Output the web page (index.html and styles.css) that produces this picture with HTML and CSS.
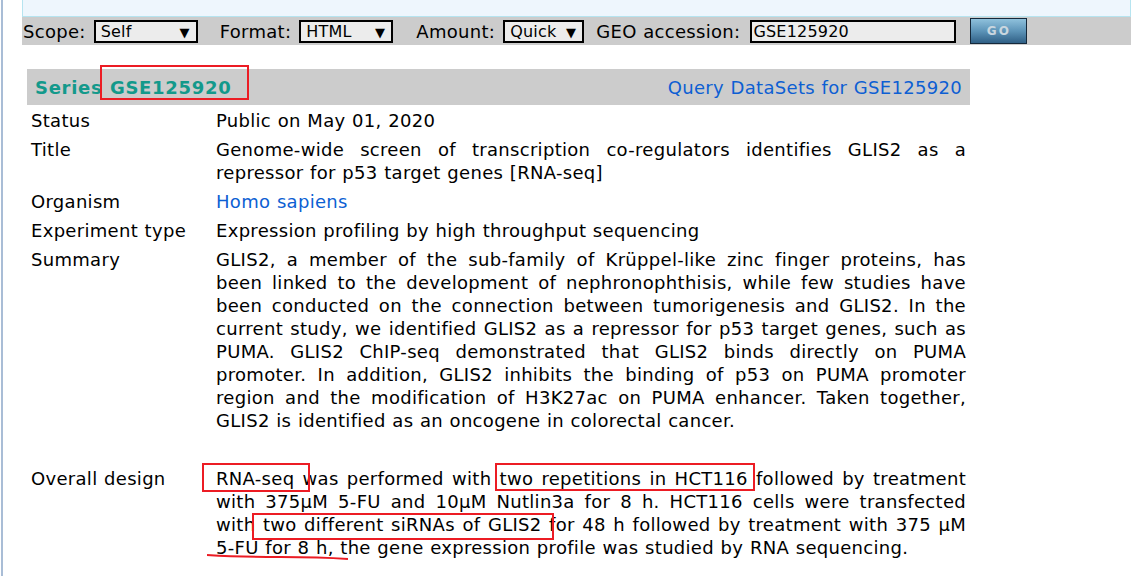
FILE: index.html
```html
<!DOCTYPE html>
<html>
<head>
<meta charset="utf-8">
<title>GEO Accession viewer - GSE125920</title>
<link rel="stylesheet" href="styles.css">
</head>
<body>
<div class="page">
  <div class="topband"></div>
  <form class="toolbar">
    <span class="lbl">Scope:</span>
    <span class="sel sel-scope">Self<span class="arr">▼</span></span>
    <span class="lbl lbl-format">Format:</span>
    <span class="sel sel-format">HTML<span class="arr">▼</span></span>
    <span class="lbl lbl-amount">Amount:</span>
    <span class="sel sel-amount">Quick<span class="arr">▼</span></span>
    <span class="lbl lbl-geo">GEO accession:</span>
    <span class="acc">GSE125920</span>
    <span class="go">GO</span>
  </form>

  <div class="content">
    <div class="series-head">
      <span class="series-title">Series GSE125920</span>
      <a class="link" href="#">Query DataSets for GSE125920</a>
    </div>

    <div class="details">
      <div class="k">Status</div>
      <div class="v">Public on May 01, 2020</div>

      <div class="k">Title</div>
      <div class="v">
        <span class="ln">Genome-wide screen of transcription co-regulators identifies GLIS2 as a</span>
        <span class="ln last">repressor for p53 target genes [RNA-seq]</span>
      </div>

      <div class="k">Organism</div>
      <div class="v"><a class="link" href="#">Homo sapiens</a></div>

      <div class="k">Experiment type</div>
      <div class="v">Expression profiling by high throughput sequencing</div>

      <div class="k">Summary</div>
      <div class="v v-summary">
        <span class="ln">GLIS2, a member of the sub-family of Krüppel-like zinc finger proteins, has</span>
        <span class="ln">been linked to the development of nephronophthisis, while few studies have</span>
        <span class="ln">been conducted on the connection between tumorigenesis and GLIS2. In the</span>
        <span class="ln">current study, we identified GLIS2 as a repressor for p53 target genes, such as</span>
        <span class="ln">PUMA. GLIS2 ChIP-seq demonstrated that GLIS2 binds directly on PUMA</span>
        <span class="ln">promoter. In addition, GLIS2 inhibits the binding of p53 on PUMA promoter</span>
        <span class="ln">region and the modification of H3K27ac on PUMA enhancer. Taken together,</span>
        <span class="ln last">GLIS2 is identified as an oncogene in colorectal cancer.</span>
      </div>

      <div class="k">Overall design</div>
      <div class="v">
        <span class="ln">RNA-seq was performed with two repetitions in HCT116 followed by treatment</span>
        <span class="ln">with 375μM 5-FU and 10μM Nutlin3a for 8 h. HCT116 cells were transfected</span>
        <span class="ln">with two different siRNAs of GLIS2 for 48 h followed by treatment with 375 μM</span>
        <span class="ln last">5-FU for 8 h, the gene expression profile was studied by RNA sequencing.</span>
      </div>
    </div>
  </div>

  <svg class="marks" width="1146" height="576" viewBox="0 0 1146 576" aria-hidden="true">
    <g fill="none" stroke="#ec1c24" stroke-width="2">
      <rect x="101" y="66" width="147" height="33"/>
      <rect x="203" y="464" width="106" height="27"/>
      <rect x="496" y="464" width="258" height="26"/>
      <rect x="253" y="514" width="300" height="25"/>
      <path d="M207 555 Q240 557 280 557 T348 559"/>
    </g>
  </svg>
</div>
</body>
</html>
```

FILE: styles.css
```css
html, body {
  margin: 0;
  padding: 0;
  background: #ffffff;
}

body {
  font-family: "DejaVu Sans", Verdana, sans-serif;
  font-size: 18px;
  color: #000;
  letter-spacing: 0.3px;
  word-spacing: 0.6px;
}

.page {
  position: relative;
  width: 1146px;
  height: 576px;
  overflow: hidden;
  box-sizing: border-box;
  margin-left: 1px;
  border-left: 2px solid #a9bdd6;
  padding-left: 19px;
}

.topband {
  width: 1107px;
  height: 16px;
  background: #eef6fd;
  border: 1px solid #b6e4f0;
  border-top: none;
}

.toolbar {
  display: flex;
  align-items: center;
  width: 1109px;
  height: 28px;
  background: #cccccc;
  margin: 0;
  padding-left: 1px;
  box-sizing: border-box;
}

.lbl {
  font-size: 18px;
  line-height: 23px;
  margin-right: 8px;
  white-space: nowrap;
}

.lbl-format { margin-left: 22px; }
.lbl-amount { margin-left: 23px; }
.lbl-geo { margin-left: 12px; margin-right: 10px; }

.sel {
  position: relative;
  box-sizing: border-box;
  height: 23px;
  border: 2px solid #000;
  background: #ececec;
  font-size: 16px;
  line-height: 19px;
  padding-left: 5px;
  display: flex;
  align-items: center;
  letter-spacing: 0.2px;
}

.sel .arr {
  position: absolute;
  right: 6px;
  top: 1px;
  font-size: 13px;
  line-height: 19px;
}

.sel-scope { width: 104px; }
.sel-format { width: 94px; }
.sel-amount { width: 81px; }

.acc {
  box-sizing: border-box;
  width: 206px;
  height: 23px;
  border: 2px solid #000;
  background: #ececec;
  font-size: 16px;
  line-height: 19px;
  padding-left: 1px;
  letter-spacing: 0.2px;
}

.go {
  box-sizing: border-box;
  margin-left: 14px;
  width: 57px;
  height: 26px;
  border: 1px solid #15283a;
  background: linear-gradient(#8fc1dc, #5d94b8 50%, #2f5f85);
  color: #c9d6df;
  font-weight: bold;
  font-size: 12px;
  letter-spacing: 2px;
  text-align: center;
  line-height: 24px;
}

.content {
  margin-left: 5px;
  margin-top: 24px;
  width: 943px;
}

.series-head {
  height: 36px;
  background: #cccccc;
  display: flex;
  align-items: center;
  justify-content: space-between;
  padding: 1px 8px 0;
  box-sizing: border-box;
}

.series-title {
  font-weight: bold;
  color: #13998b;
  font-size: 18px;
  letter-spacing: 0.7px;
}

.link {
  color: #0d5fd3;
  text-decoration: none;
}

.details {
  display: grid;
  grid-template-columns: 185px 758px;
  margin-top: 1px;
  line-height: 23px;
}

.k, .v {
  padding: 3px 4px;
}

.v-summary {
  padding-bottom: 32px;
}

.ln {
  display: block;
  text-align: justify;
  text-align-last: justify;
  white-space: nowrap;
}

.ln.last {
  text-align-last: left;
}

.marks {
  position: absolute;
  top: 0;
  left: -3px;
  pointer-events: none;
}
```
